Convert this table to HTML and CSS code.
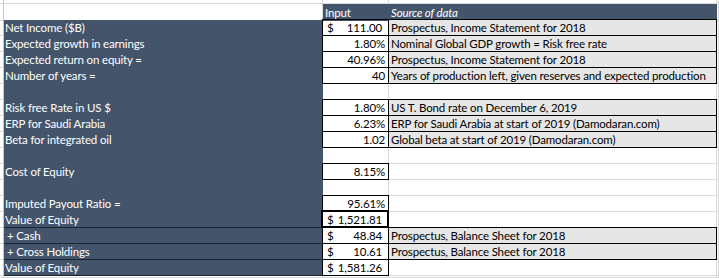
FILE: index.html
```html
<!DOCTYPE html>
<html lang="en">
<head>
  <meta charset="UTF-8" />
  <title>Saudi Aramco - Value of Equity</title>
  <link rel="stylesheet" href="styles.css">
</head>
<body>

  <div class="sheet">
    <div class="row top">
      <div class="cell edge-left"></div><div class="cell"></div><div class="cell"></div><div class="cell"></div><div class="cell"></div>
    </div>

    <div class="row">
      <div class="cell edge-left"></div>
      <div class="cell"></div>
      <div class="cell head">Input</div>
      <div class="cell head"><em>Source of data</em></div>
      <div class="cell"></div>
    </div>

    <div class="row">
      <div class="cell edge-left"></div>
      <div class="cell label">Net Income ($B)</div>
      <div class="cell val acct box"><span>$</span><span>111.00</span></div>
      <div class="cell src box">Prospectus, Income Statement for 2018</div>
      <div class="cell"></div>
    </div>
    <div class="row">
      <div class="cell edge-left"></div>
      <div class="cell label">Expected growth in earnings</div>
      <div class="cell val box">1.80%</div>
      <div class="cell src box">Nominal Global GDP growth = Risk free rate</div>
      <div class="cell"></div>
    </div>
    <div class="row">
      <div class="cell edge-left"></div>
      <div class="cell label">Expected return on equity =</div>
      <div class="cell val box">40.96%</div>
      <div class="cell src box">Prospectus, Income Statement for 2018</div>
      <div class="cell"></div>
    </div>
    <div class="row">
      <div class="cell edge-left"></div>
      <div class="cell label">Number of years =</div>
      <div class="cell val box">40</div>
      <div class="cell src box">Years of production left, given reserves and expected production</div>
      <div class="cell"></div>
    </div>
    <div class="row">
      <div class="cell edge-left"></div>
      <div class="cell label"></div>
      <div class="cell"></div>
      <div class="cell"></div>
      <div class="cell"></div>
    </div>

    <div class="row">
      <div class="cell edge-left"></div>
      <div class="cell label">Risk free Rate in US $</div>
      <div class="cell val box">1.80%</div>
      <div class="cell src box">US T. Bond rate on December 6, 2019</div>
      <div class="cell"></div>
    </div>
    <div class="row">
      <div class="cell edge-left"></div>
      <div class="cell label">ERP for Saudi Arabia</div>
      <div class="cell val box">6.23%</div>
      <div class="cell src box">ERP for Saudi Arabia at start of 2019 (Damodaran.com)</div>
      <div class="cell"></div>
    </div>
    <div class="row">
      <div class="cell edge-left"></div>
      <div class="cell label">Beta for integrated oil</div>
      <div class="cell val box">1.02</div>
      <div class="cell src box">Global beta at start of 2019 (Damodaran.com)</div>
      <div class="cell"></div>
    </div>
    <div class="row">
      <div class="cell edge-left"></div>
      <div class="cell label"></div>
      <div class="cell"></div>
      <div class="cell"></div>
      <div class="cell"></div>
    </div>

    <div class="row">
      <div class="cell edge-left"></div>
      <div class="cell label">Cost of Equity</div>
      <div class="cell val box">8.15%</div>
      <div class="cell"></div>
      <div class="cell"></div>
    </div>
    <div class="row">
      <div class="cell edge-left"></div>
      <div class="cell label"></div>
      <div class="cell"></div>
      <div class="cell"></div>
      <div class="cell"></div>
    </div>

    <div class="row">
      <div class="cell edge-left"></div>
      <div class="cell label">Imputed Payout Ratio =</div>
      <div class="cell val box">95.61%</div>
      <div class="cell"></div>
      <div class="cell"></div>
    </div>
    <div class="row">
      <div class="cell edge-left"></div>
      <div class="cell label rule">Value of Equity</div>
      <div class="cell val acct box thick"><span>$</span><span>1,521.81</span></div>
      <div class="cell"></div>
      <div class="cell"></div>
    </div>
    <div class="row">
      <div class="cell edge-left"></div>
      <div class="cell label rule indent">+ Cash</div>
      <div class="cell val acct box"><span>$</span><span>48.84</span></div>
      <div class="cell src box">Prospectus, Balance Sheet for 2018</div>
      <div class="cell"></div>
    </div>
    <div class="row">
      <div class="cell edge-left"></div>
      <div class="cell label rule indent">+ Cross Holdings</div>
      <div class="cell val acct box"><span>$</span><span>10.61</span></div>
      <div class="cell src box">Prospectus, Balance Sheet for 2018</div>
      <div class="cell"></div>
    </div>
    <div class="row">
      <div class="cell edge-left"></div>
      <div class="cell label rule">Value of Equity</div>
      <div class="cell val acct box"><span>$</span><span>1,581.26</span></div>
      <div class="cell"></div>
      <div class="cell"></div>
    </div>

    <div class="row tail">
      <div class="cell edge-left"></div><div class="cell"></div><div class="cell"></div><div class="cell"></div><div class="cell"></div>
    </div>
  </div>

</body>
</html>
```

FILE: styles.css
```css
:root {
  --sheet-blue: #44546a;
  --source-gray: #e7e6e6;
  --grid-line: #d9d9d9;
}

body {
  margin: 0;
  background: #fff;
  color: #000;
  font-family: 'Lato', 'Liberation Sans', sans-serif;
  font-size: 11.5px;
  letter-spacing: -0.15px;
}

.sheet {
  width: 719px;
}

.row {
  display: grid;
  grid-template-columns: 4px 319px 66px 328px 1fr;
  height: 16px;
}

.row.top {
  height: 4px;
}

.row.tail {
  height: 2px;
}

.cell {
  position: relative;
  box-sizing: border-box;
  border-right: 1px solid var(--grid-line);
  border-bottom: 1px solid var(--grid-line);
  line-height: 15px;
  white-space: nowrap;
}

.edge-left {
  border-right-color: #c6c6c6;
}

.head {
  background: var(--sheet-blue);
  color: #fff;
  border: none;
  padding-left: 2px;
  line-height: 17px;
}

.label {
  background: var(--sheet-blue);
  color: #fff;
  border: none;
  padding-left: 1px;
  line-height: 16px;
}

.label.rule {
  border-bottom: 1px solid #1d2530;
  line-height: 15px;
}

.label.indent {
  padding-left: 3px;
}

.val {
  text-align: right;
  padding-right: 3px;
}

.acct {
  display: flex;
  justify-content: space-between;
  padding: 0 6px 0 4px;
}

.src {
  background: var(--source-gray);
  padding-left: 2px;
}

/* black frame drawn on the shared grid line, like a cell border in the sheet */
.box::after {
  content: "";
  position: absolute;
  inset: -1px;
  border: 1px solid #000;
  pointer-events: none;
}

.box.thick::after {
  inset: -2px -1px -1px -2px;
  border-width: 2px;
}
```
